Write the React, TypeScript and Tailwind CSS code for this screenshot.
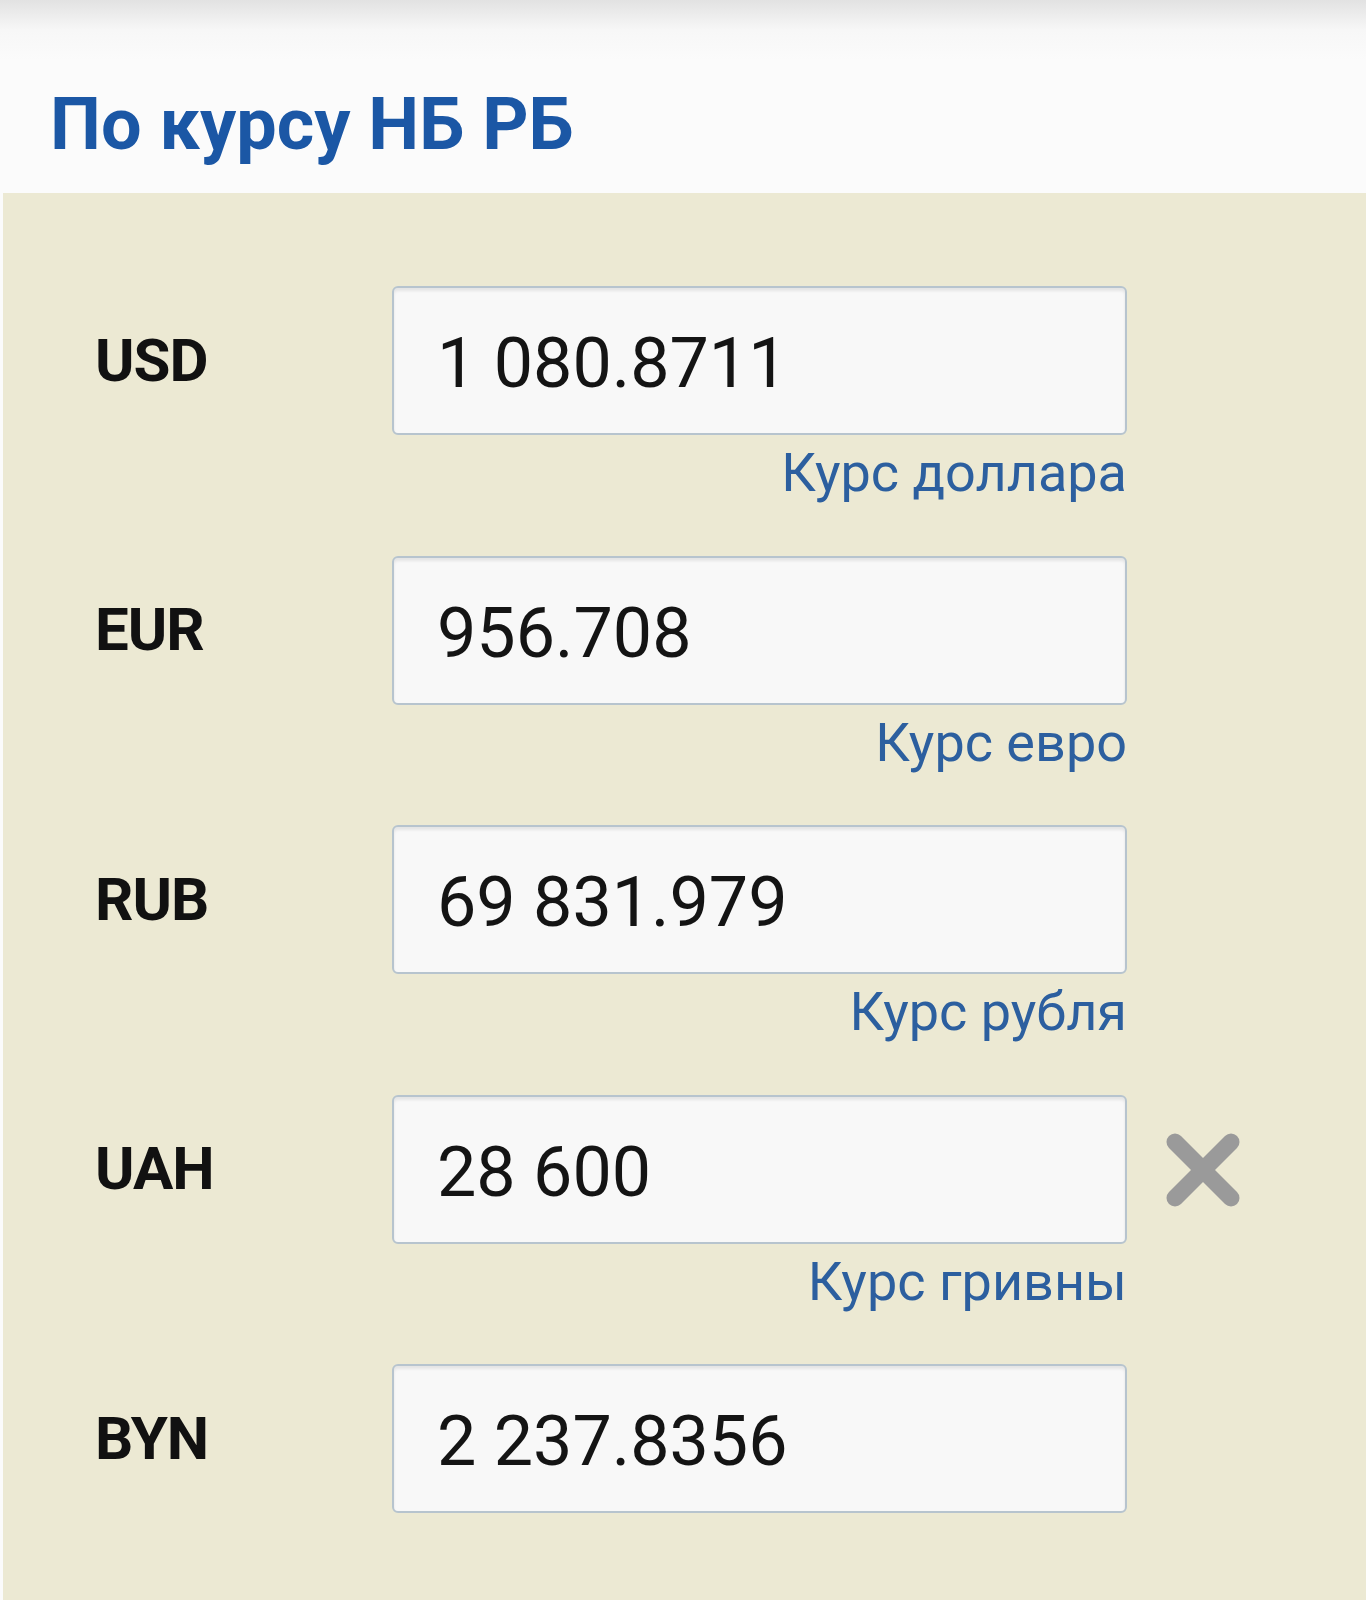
import React from "react";

type Row = { code: string; value: string; note?: string; clear?: boolean };

const rows: Row[] = [
  { code: "USD", value: "1 080.8711", note: "Курс доллара" },
  { code: "EUR", value: "956.708", note: "Курс евро" },
  { code: "RUB", value: "69 831.979", note: "Курс рубля" },
  { code: "UAH", value: "28 600", note: "Курс гривны", clear: true },
  { code: "BYN", value: "2 237.8356" },
];

function ClearIcon() {
  return (
    <svg width="80" height="80" viewBox="0 0 80 80">
      <g stroke="#9a9a9a" strokeWidth="17" strokeLinecap="round">
        <line x1="12" y1="12" x2="68" y2="68" />
        <line x1="68" y1="12" x2="12" y2="68" />
      </g>
    </svg>
  );
}

export default function App() {
  return (
    <div className="w-full min-h-[1600px] bg-[#fbfbfb] font-['Roboto',sans-serif] flex flex-col">
      <div className="h-[193px] bg-[linear-gradient(to_bottom,#e2e2e2_0px,#f7f7f7_30px,#fbfbfb_60px)] pl-[50px] pt-[89px]">
        <h1 className="text-[72px] leading-[72px] font-bold text-[#1b57a5]">
          По курсу НБ РБ
        </h1>
      </div>
      <div className="ml-[3px] flex-1 bg-[#ece9d3] pt-[93px] flex flex-col gap-[54.5px]">
        {rows.map((r) => (
          <div key={r.code} className="flex items-start">
            <div className="w-[389px] h-[149px] pl-[92px] flex items-center text-[60px] font-bold text-[#111] tracking-[-1px]">
              {r.code}
            </div>
            <div className="w-[735px] flex flex-col">
              <div className="h-[149px] rounded-[6px] border-2 border-[#b7c4ce] bg-[#f8f8f8] shadow-[inset_0_3px_3px_rgba(0,0,0,0.08)] flex items-center pl-[43px] pt-[6px] text-[70px] text-[#141414]">
                {r.value}
              </div>
              {r.note && (
                <div className="mt-[10px] h-[56px] leading-[56px] text-right text-[54px] text-[#2c5f9f]">
                  {r.note}
                </div>
              )}
            </div>
            {r.clear && (
              <div className="ml-[36px] h-[149px] flex items-center pt-[2px]">
                <ClearIcon />
              </div>
            )}
          </div>
        ))}
      </div>
    </div>
  );
}
